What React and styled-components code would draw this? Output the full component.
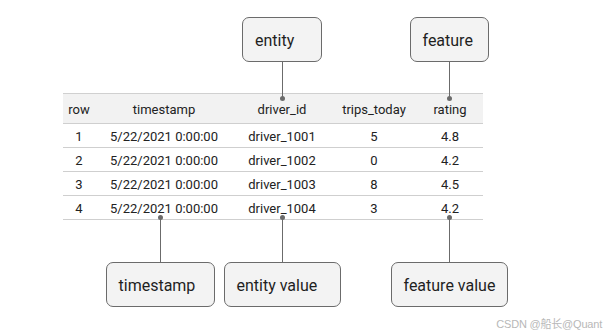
import React from "react";
import styled, { createGlobalStyle } from "styled-components";

const Global = createGlobalStyle`
  html, body { margin: 0; padding: 0; background: #ffffff; }
  body { font-family: Roboto, "Liberation Sans", Arial, sans-serif; color: #202020; }
`;

const COLS = "32px 138px 98px 86px 66px";

const Page = styled.div`
  position: relative;
  width: 611px;
  height: 334px;
  overflow: hidden;
  padding: 17px 0 0 63px;
  box-sizing: border-box;
`;

const Diagram = styled.div`
  display: flex;
  flex-direction: column;
  width: 420px;
`;

const AnnoRow = styled.div`
  display: grid;
  grid-template-columns: ${COLS};
  position: relative;
  z-index: 1;
  margin: ${(p) => (p.$top ? "0 0 -7px 0" : "-4px 0 0 0")};
`;

const Anno = styled.div`
  grid-column: ${(p) => p.$col};
  justify-self: center;
  display: flex;
  flex-direction: ${(p) => (p.$top ? "column" : "column-reverse")};
  align-items: center;
  margin-left: ${(p) => p.$shift || 0}px;
`;

const Box = styled.div`
  width: ${(p) => p.$w}px;
  height: 45px;
  box-sizing: border-box;
  border: 1px solid #6b6b6b;
  border-radius: 7px;
  background: #f3f3f3;
  display: flex;
  align-items: center;
  padding-left: 12px;
  font-size: 16px;
  color: #1f1f1f;
  padding-top: 2px;
`;

const Stem = styled.div`
  width: 1px;
  height: ${(p) => p.$h}px;
  background: #6b6b6b;
  position: relative;
  &::after {
    content: "";
    position: absolute;
    left: -2px;
    ${(p) => (p.$top ? "bottom: -1px;" : "top: -1px;")}
    width: 5px;
    height: 5px;
    border-radius: 50%;
    background: #6b6b6b;
  }
`;

const Table = styled.div`
  display: flex;
  flex-direction: column;
  border-top: 1px solid #d0d0d0;
`;

const Row = styled.div`
  display: grid;
  grid-template-columns: ${COLS};
  height: ${(p) => (p.$head ? 29 : 23)}px;
  border-bottom: 1px solid #cfcfcf;
  background: ${(p) => (p.$head ? "#f2f2f2" : "#ffffff")};
  align-items: center;
  font-size: 13px;
  color: #222222;
`;

const Cell = styled.div`
  text-align: center;
  white-space: nowrap;
  padding-top: ${(p) => (p.$head ? 2 : 1)}px;
`;

const Watermark = styled.div`
  position: absolute;
  right: 9px;
  bottom: 3px;
  font-size: 11px;
  color: #b8b8b8;
  font-family: "Liberation Sans", "Noto Sans CJK SC", sans-serif;
  letter-spacing: -0.2px;
`;

const head = ["row", "timestamp", "driver_id", "trips_today", "rating"];
const rows = [
  ["1", "5/22/2021 0:00:00", "driver_1001", "5", "4.8"],
  ["2", "5/22/2021 0:00:00", "driver_1002", "0", "4.2"],
  ["3", "5/22/2021 0:00:00", "driver_1003", "8", "4.5"],
  ["4", "5/22/2021 0:00:00", "driver_1004", "3", "4.2"],
];

export default function App() {
  return (
    <>
      <Global />
      <Page>
        <Diagram>
          <AnnoRow $top>
            <Anno $top $col={3}>
              <Box $w={80}>entity</Box>
              <Stem $top $h={38} />
            </Anno>
            <Anno $top $col={5} $shift={-2}>
              <Box $w={79}>feature</Box>
              <Stem $top $h={38} />
            </Anno>
          </AnnoRow>
          <Table>
            <Row $head>
              {head.map((h) => (
                <Cell $head key={h}>{h}</Cell>
              ))}
            </Row>
            {rows.map((r) => (
              <Row key={r[0]}>
                {r.map((c, i) => (
                  <Cell key={i}>{c}</Cell>
                ))}
              </Row>
            ))}
          </Table>
          <AnnoRow>
            <Anno $col={2} $shift={-8}>
              <Box $w={109}>timestamp</Box>
              <Stem $h={46} />
            </Anno>
            <Anno $col={3}>
              <Box $w={117}>entity value</Box>
              <Stem $h={46} />
            </Anno>
            <Anno $col={5} $shift={-2}>
              <Box $w={117}>feature value</Box>
              <Stem $h={46} />
            </Anno>
          </AnnoRow>
        </Diagram>
        <Watermark>CSDN @船长@Quant</Watermark>
      </Page>
    </>
  );
}
